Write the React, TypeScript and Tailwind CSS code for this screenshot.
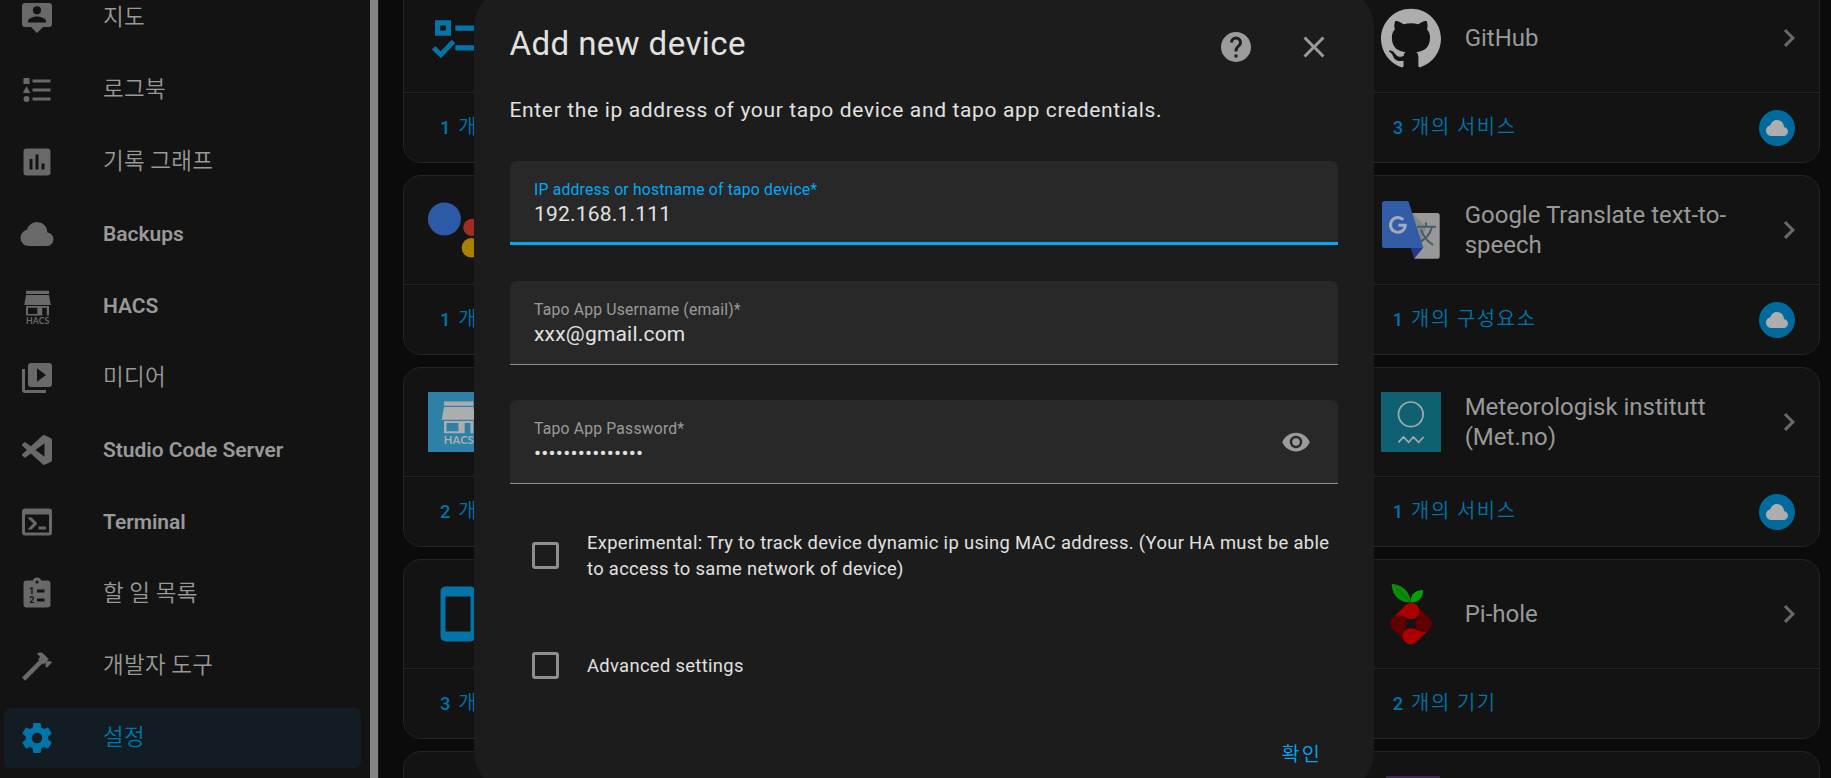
import type { ReactNode } from "react";
import { SiGithub } from "react-icons/si";

const mdi = {
  account:
    "M4,2H20A2,2 0 0,1 22,4V16A2,2 0 0,1 20,18H16L12,22L8,18H4A2,2 0 0,1 2,16V4A2,2 0 0,1 4,2M12,4.2A2.7,2.7 0 0,0 9.3,6.9A2.7,2.7 0 0,0 12,9.6A2.7,2.7 0 0,0 14.7,6.9A2.7,2.7 0 0,0 12,4.2M18,15V14.1C18,12.1 14,11 12,11C10,11 6,12.1 6,14.1V15H18Z",
  logbook:
    "M5,9.5L7.5,14H2.5L5,9.5M3,4H7V8H3V4M5,20A2,2 0 0,0 7,18A2,2 0 0,0 5,16A2,2 0 0,0 3,18A2,2 0 0,0 5,20M9,5V7H21V5H9M9,19H21V17H9V19M9,13H21V11H9V13Z",
  chart:
    "M9,17H7V10H9V17M13,17H11V7H13V17M17,17H15V13H17V17M19,3H5A2,2 0 0,0 3,5V19A2,2 0 0,0 5,21H19A2,2 0 0,0 21,19V5A2,2 0 0,0 19,3Z",
  cloud:
    "M6.5 20Q4.22 20 2.61 18.43 1 16.85 1 14.58 1 12.63 2.17 11.1 3.35 9.57 5.25 9.15 5.88 6.85 7.75 5.43 9.63 4 12 4 14.93 4 16.96 6.04 19 8.07 19 11 20.73 11.2 21.86 12.5 23 13.78 23 15.5 23 17.38 21.69 18.69 20.38 20 18.5 20Z",
  media:
    "M4,6H2V20A2,2 0 0,0 4,22H18V20H4V6M20,2H8A2,2 0 0,0 6,4V16A2,2 0 0,0 8,18H20A2,2 0 0,0 22,16V4A2,2 0 0,0 20,2M12,14.5V5.5L18,10L12,14.5Z",
  vscode:
    "M21.29 4.1L17.17 2.13A1.248 1.248 0 0 0 15.75 2.37L7.87 9.55L4.44 6.95C4.12 6.71 3.68 6.73 3.38 7L2.28 8C1.92 8.33 1.92 8.9 2.28 9.24L5.25 11.95L2.28 14.66C1.92 15 1.92 15.57 2.28 15.9L3.38 16.9C3.68 17.17 4.12 17.19 4.44 16.95L7.87 14.35L15.76 21.55C16.13 21.93 16.7 22.02 17.17 21.79L21.29 19.81C21.72 19.6 22 19.17 22 18.68V5.23C22 4.75 21.72 4.31 21.29 4.1M17 16.45L11 11.95L17 7.45V16.45Z",
  console:
    "M20,19V7H4V19H20M20,3A2,2 0 0,1 22,5V19A2,2 0 0,1 20,21H4A2,2 0 0,1 2,19V5C2,3.89 2.9,3 4,3H20M13,17V15H18V17H13M9.58,13L5.57,9H8.4L11.7,12.3C12.09,12.69 12.09,13.33 11.7,13.72L8.42,17H5.59L9.58,13Z",
  clipboard:
    "M19,3H14.82C14.4,1.84 13.3,1 12,1C10.7,1 9.6,1.84 9.18,3H5A2,2 0 0,0 3,5V19A2,2 0 0,0 5,21H19A2,2 0 0,0 21,19V5A2,2 0 0,0 19,3M12,3A1,1 0 0,1 13,4A1,1 0 0,1 12,5A1,1 0 0,1 11,4A1,1 0 0,1 12,3M12,9H17V11H12V9M12,15H17V17H12V15Z",
  hammer:
    "M2,19.63L13.43,8.2L12.72,7.5L14.14,6.07L12,3.89C13.2,2.7 15.09,2.7 16.27,3.89L19.87,7.5L18.45,8.91H21.29L22,9.62L18.45,13.21L17.74,12.5V9.62L16.27,11.04L15.56,10.33L4.13,21.76L2,19.63Z",
  cog: "M12,15.5A3.5,3.5 0 0,1 8.5,12A3.5,3.5 0 0,1 12,8.5A3.5,3.5 0 0,1 15.5,12A3.5,3.5 0 0,1 12,15.5M19.43,12.97C19.47,12.65 19.5,12.33 19.5,12C19.5,11.67 19.47,11.34 19.43,11L21.54,9.37C21.73,9.22 21.78,8.95 21.66,8.73L19.66,5.27C19.54,5.05 19.27,4.96 19.05,5.05L16.56,6.05C16.04,5.66 15.5,5.32 14.87,5.07L14.5,2.42C14.46,2.18 14.25,2 14,2H10C9.75,2 9.54,2.18 9.5,2.42L9.13,5.07C8.5,5.32 7.96,5.66 7.44,6.05L4.95,5.05C4.73,4.96 4.46,5.05 4.34,5.27L2.34,8.73C2.21,8.95 2.27,9.22 2.46,9.37L4.57,11C4.53,11.34 4.5,11.67 4.5,12C4.5,12.33 4.53,12.65 4.57,12.97L2.46,14.63C2.27,14.78 2.21,15.05 2.34,15.27L4.34,18.73C4.46,18.95 4.73,19.03 4.95,18.95L7.44,17.94C7.96,18.34 8.5,18.68 9.13,18.93L9.5,21.58C9.54,21.82 9.75,22 10,22H14C14.25,22 14.46,21.82 14.5,21.58L14.87,18.93C15.5,18.67 16.04,18.34 16.56,17.94L19.05,18.95C19.27,19.03 19.54,18.95 19.66,18.73L21.66,15.27C21.78,15.05 21.73,14.78 21.54,14.63L19.43,12.97Z",
  help: "M15.07,11.25L14.17,12.17C13.45,12.89 13,13.5 13,15H11V14.5C11,13.39 11.45,12.39 12.17,11.67L13.41,10.41C13.78,10.05 14,9.55 14,9C14,7.89 13.1,7 12,7A2,2 0 0,0 10,9H8A4,4 0 0,1 12,5A4,4 0 0,1 16,9C16,9.88 15.64,10.67 15.07,11.25M13,19H11V17H13M12,2A10,10 0 0,0 2,12A10,10 0 0,0 12,22A10,10 0 0,0 22,12C22,6.47 17.5,2 12,2Z",
  close:
    "M19,6.41L17.59,5L12,10.59L6.41,5L5,6.41L10.59,12L5,17.59L6.41,19L12,13.41L17.59,19L19,17.59L13.41,12L19,6.41Z",
  eye: "M12,9A3,3 0 0,0 9,12A3,3 0 0,0 12,15A3,3 0 0,0 15,12A3,3 0 0,0 12,9M12,17A5,5 0 0,1 7,12A5,5 0 0,1 12,7A5,5 0 0,1 17,12A5,5 0 0,1 12,17M12,4.5C7,4.5 2.73,7.61 1,12C2.73,16.39 7,19.5 12,19.5C17,19.5 21.27,16.39 23,12C21.27,7.61 17,4.5 12,4.5Z",
  chevron: "M8.59,16.58L13.17,12L8.59,7.41L10,6L16,12L10,18L8.59,16.58Z",
  cellphone:
    "M17,19H7V5H17M17,1H7C5.89,1 5,1.89 5,3V21A2,2 0 0,0 7,23H17A2,2 0 0,0 19,21V3C19,1.89 18.1,1 17,1Z",
};

function Icon({ d, className = "size-9", children }: { d: string; className?: string; children?: ReactNode }) {
  return (
    <svg viewBox="0 0 24 24" className={`shrink-0 fill-current ${className}`}>
      <path fillRule="evenodd" d={d} />
      {children}
    </svg>
  );
}

function HacsIcon({ className }: { className: string }) {
  return (
    <svg viewBox="0 0 24 24" className={`shrink-0 overflow-visible fill-current ${className}`}>
      <path
        fillRule="evenodd"
        d="M4.67 1.8H20V4H4.67ZM4.67 4.7H20L21.2 11.3H3.5ZM4.67 12H20V18.4H18.5V13.1H15.5V18.4H4.67ZM6 13.1V17.3H12.2V13.1Z"
      />
      <text x="12.4" y="24" textAnchor="middle" textLength="15.6" fontSize="5.8" fontWeight="700" fontFamily="Lato, sans-serif">
        HACS
      </text>
    </svg>
  );
}

function TodoIcon() {
  return (
    <Icon d={mdi.clipboard}>
      <g className="fill-[#131313]" fontSize="6" fontWeight="700" fontFamily="Roboto, sans-serif">
        <text x="6.6" y="12">1</text>
        <text x="6.8" y="18">2</text>
      </g>
    </Icon>
  );
}

const KO = "font-['Noto_Sans_CJK_KR',sans-serif] font-[350]";

const navItems: { label: string; korean?: boolean; icon: ReactNode; active?: boolean }[] = [
  { label: "지도", korean: true, icon: <Icon d={mdi.account} /> },
  { label: "로그북", korean: true, icon: <Icon d={mdi.logbook} /> },
  { label: "기록 그래프", korean: true, icon: <Icon d={mdi.chart} /> },
  { label: "Backups", icon: <Icon d={mdi.cloud} /> },
  { label: "HACS", icon: <HacsIcon className="size-9" /> },
  { label: "미디어", korean: true, icon: <Icon d={mdi.media} /> },
  { label: "Studio Code Server", icon: <Icon d={mdi.vscode} /> },
  { label: "Terminal", icon: <Icon d={mdi.console} /> },
  { label: "할 일 목록", korean: true, icon: <TodoIcon /> },
  { label: "개발자 도구", korean: true, icon: <Icon d={mdi.hammer} /> },
  { label: "설정", korean: true, icon: <Icon d={mdi.cog} />, active: true },
];

function Sidebar() {
  return (
    <aside className="flex h-full w-[379px] shrink-0 border-r border-[#1c1c1c] bg-[#131313]">
      <nav className="-mt-3 flex w-[370px] shrink-0 flex-col gap-3 pl-1 pr-[9px]">
        {navItems.map((item) => (
          <a
            key={item.label}
            className={`flex h-[60px] shrink-0 items-center gap-12 rounded-md pl-[15px] ${
              item.active ? "bg-[#111d22] text-[#0274a8]" : "text-[#696969]"
            }`}
          >
            {item.icon}
            <span
              className={`whitespace-nowrap ${item.active ? "" : "text-[#999999]"} ${
                item.korean ? `${KO} -mt-[5px] text-[22.5px] tracking-[0.3px]` : "mt-[2px] text-[21px] font-semibold tracking-[-0.04px]"
              }`}
            >
              {item.label}
            </span>
          </a>
        ))}
      </nav>
      <div className="w-2 bg-[#848484]" />
    </aside>
  );
}

function AssistantLogo() {
  return (
    <svg viewBox="0 0 60 60" className="size-[60px]">
      <circle cx="16.4" cy="19" r="16.5" fill="#2c5aa6" />
      <circle cx="43.9" cy="27.4" r="8.6" fill="#9f2d24" />
      <circle cx="43.5" cy="47.8" r="9.8" fill="#aa8003" />
      <circle cx="56" cy="16" r="3.5" fill="#237239" />
    </svg>
  );
}

function ChecklistLogo() {
  return (
    <svg viewBox="0 0 60 60" className="size-[60px] fill-[#0274a8]">
      <path fillRule="evenodd" d="M7 12.2H23V27.8H7ZM12.2 17.4V22.6H17.8V17.4Z" />
      <path d="M27.3 17.4H56V22.7H27.3ZM27.3 37.2H56V42.6H27.3Z" />
      <path d="M5.5 39.8L12.9 46.8L25.5 33.6" fill="none" stroke="#0274a8" strokeWidth="5" />
    </svg>
  );
}

function TranslateLogo() {
  return (
    <svg viewBox="0 0 60 60" className="size-[60px]">
      <path d="M24 13H56.2Q58.7 13 58.7 15.5V56.2Q58.7 58.7 56.2 58.7H33.3L36 47Z" fill="#989898" />
      <path d="M31 13L45 27L40 45Z" fill="#868687" />
      <path d="M36 26.8H55M45 22.6V27M51 27Q48 38 37.5 42.5M40 29.5Q43 39 52 45" stroke="#455e68" strokeWidth="2.1" fill="none" />
      <path d="M29.6 47.5H42.3L33.3 58.7Z" fill="#2a3788" />
      <path d="M3.5 1H27.3L42.4 48H3.5Q1 48 1 45.5V3.5Q1 1 3.5 1Z" fill="#325ca6" />
      <path d="M22.3 19.8A7.4 7.4 0 1 0 24.3 25.2H17.4" stroke="#a3abb9" strokeWidth="3" fill="none" />
    </svg>
  );
}

function MetLogo() {
  return (
    <svg viewBox="0 0 60 60" className="size-[60px] bg-[#0f6070]">
      <g stroke="#a6abac" strokeWidth="1.7" fill="none">
        <circle cx="29.8" cy="22.3" r="12.3" />
        <path d="M17.4 50.3L22.5 45L27.7 50.3L32.3 45L37.6 50.3L42.7 45" />
      </g>
    </svg>
  );
}

function PiholeLogo() {
  const petal = "M24.3 21.6A8.1 8.1 0 1 1 28 34.8C24 34.3 22 31.6 17.5 31.6Q14 31.6 11.8 34Z";
  return (
    <svg viewBox="0 0 60 60" className="size-[60px] overflow-visible">
      <path d="M10.7 0C19 .2 29 5.5 29.8 18.5C20 18.8 11 13 10.7 0Z" fill="#0c8a0c" />
      <path d="M15 5Q24 10 28.8 18" stroke="#086008" strokeWidth=".8" fill="none" />
      <path d="M42 6C35 6 29 10 29.8 18.5C38 19 42.3 13 42 6Z" fill="#04a004" />
      <g fill="#600000">
        <path d={petal} transform="rotate(-90 30 39.7)" />
        <path d={petal} transform="rotate(90 30 39.7)" />
      </g>
      <g fill="#ab0000">
        <path d={petal} />
        <path d={petal} transform="rotate(180 30 39.7)" />
      </g>
      <g fill="#600000">
        <circle cx="17.5" cy="39.7" r="8.1" />
        <circle cx="42.5" cy="39.7" r="8.1" />
      </g>
    </svg>
  );
}

type CardProps = { logo: ReactNode; title?: string; count?: string; unit?: string; cloud?: boolean };

function Card({ logo, title, count, unit, cloud }: CardProps) {
  return (
    <section className="flex h-[180px] flex-col rounded-[18px] border border-[#242424] bg-[#131313]">
      <div className="flex h-[109px] shrink-0 items-center border-b border-[#242424] pl-6 pr-3">
        <div className="size-[60px] shrink-0">{logo}</div>
        <h2 className="ml-6 mr-auto w-[280px] text-2xl leading-[30px] text-[#999999]">{title}</h2>
        <Icon d={mdi.chevron} className="size-9 text-[#696969]" />
      </div>
      <div className="flex grow items-center justify-between pl-9 pr-6">
        {count && (
          <span className="flex items-center whitespace-pre text-[18.375px] font-medium leading-9 tracking-[1.64px] text-[#0274a8]">
            {count + " "}
            <span className={`${KO} -mt-[3px] text-[19.9px]`}>{unit}</span>
          </span>
        )}
        {cloud && (
          <span className="flex size-9 items-center justify-center rounded-full bg-[#006a9c] text-[#adadad]">
            <Icon d={mdi.cloud} className="size-6" />
          </span>
        )}
      </div>
    </section>
  );
}

const leftCards: CardProps[] = [
  { logo: <ChecklistLogo />, count: "1", unit: "개" },
  { logo: <AssistantLogo />, count: "1", unit: "개" },
  {
    logo: (
      <div className="flex size-[60px] items-center justify-center bg-[#2d80a6] pb-[3px] text-[#adadad]">
        <HacsIcon className="size-[46px]" />
      </div>
    ),
    count: "2",
    unit: "개",
  },
  { logo: <Icon d={mdi.cellphone} className="size-[60px] text-[#0274a8]" />, count: "3", unit: "개" },
  { logo: null },
];

const rightCards: CardProps[] = [
  { logo: <SiGithub className="size-[60px] text-[#adadad]" />, title: "GitHub", count: "3", unit: "개의 서비스", cloud: true },
  { logo: <TranslateLogo />, title: "Google Translate text-to-speech", count: "1", unit: "개의 구성요소", cloud: true },
  { logo: <MetLogo />, title: "Meteorologisk institutt (Met.no)", count: "1", unit: "개의 서비스", cloud: true },
  { logo: <PiholeLogo />, title: "Pi-hole", count: "2", unit: "개의 기기" },
  { logo: <div className="ml-[5px] h-full w-[54px] bg-[#402558]" /> },
];

function Column({ cards }: { cards: CardProps[] }) {
  return (
    <div className="flex flex-col gap-3">
      {cards.map((card, i) => (
        <Card key={i} {...card} />
      ))}
    </div>
  );
}

type FieldProps = { label: string; value: string; focused?: boolean; className: string; trailing?: ReactNode };

function Field({ label, value, focused, className, trailing }: FieldProps) {
  return (
    <div
      className={`flex h-[84px] shrink-0 items-center rounded-t-md bg-[#282828] pl-6 pr-[27px] ${
        focused ? "border-b-[3px] border-[#03a9f4]" : "border-b border-[#8e8e8e]"
      } ${className}`}
    >
      <div className="flex h-full grow flex-col pt-[19px]">
        <label className={`text-[15.75px] leading-5 tracking-[0.18px] ${focused ? "text-[#03a9f4]" : "text-[#9b9b9b]"}`}>{label}</label>
        <span className="text-[21px] font-[450] leading-7 tracking-[0.197px] text-[#e1e1e1]">{value}</span>
      </div>
      {trailing}
    </div>
  );
}

function Check({ label, className }: { label: string; className: string }) {
  return (
    <label className={`flex items-center gap-7 pl-[22px] ${className}`}>
      <span className="size-[27px] shrink-0 rounded-[3px] border-[3px] border-[#8e8e8e]" />
      <span className="text-[18.375px] font-[450] leading-[26px] tracking-[0.335px] text-[#e1e1e1]">{label}</span>
    </label>
  );
}

function Dialog() {
  return (
    <div role="dialog" className="absolute left-[474px] -top-[14px] flex h-[808px] w-[900px] flex-col rounded-[42px] bg-[#1c1c1c] px-9 pt-[37px]">
      <header className="flex h-12 shrink-0 items-center">
        <h1 className="-ml-[0.5px] mr-auto self-start text-[33.05px] leading-[42px] tracking-[0.41px] text-[#e1e1e1]">Add new device</h1>
        <div className="flex gap-[42px] pr-1.5 text-[#9b9b9b]">
          <Icon d={mdi.help} />
          <Icon d={mdi.close} />
        </div>
      </header>
      <p className="-ml-[0.5px] mt-[23px] text-[21px] font-[450] leading-8 tracking-[0.65px] text-[#e1e1e1]">
        Enter the ip address of your tapo device and tapo app credentials.
      </p>
      <Field label="IP address or hostname of tapo device*" value="192.168.1.111" focused className="mt-[35px]" />
      <Field label="Tapo App Username (email)*" value="xxx@gmail.com" className="mt-9" />
      <Field
        label="Tapo App Password*"
        value="•••••••••••••••"
        className="mt-[35px]"
        trailing={<Icon d={mdi.eye} className="size-[30px] text-[#9b9b9b]" />}
      />
      <Check
        className="mt-[45px] h-[53px]"
        label="Experimental: Try to track device dynamic ip using MAC address. (Your HA must be able to access to same network of device)"
      />
      <Check className="mt-[70px] h-[27px]" label="Advanced settings" />
      <button className={`${KO} mt-[47px] self-end pr-4 text-[19.7px] leading-[54px] tracking-[2.2px] text-[#03a9f4]`}>확인</button>
    </div>
  );
}

export default function App() {
  return (
    <div className="relative flex h-screen w-full overflow-hidden bg-[#0b0b0b] font-[Roboto,sans-serif]">
      <Sidebar />
      <main className="-mt-[17px] grid grow grid-cols-3 items-start gap-3 pl-6 pr-[11px]">
        <Column cards={leftCards} />
        <div />
        <Column cards={rightCards} />
      </main>
      <Dialog />
    </div>
  );
}
